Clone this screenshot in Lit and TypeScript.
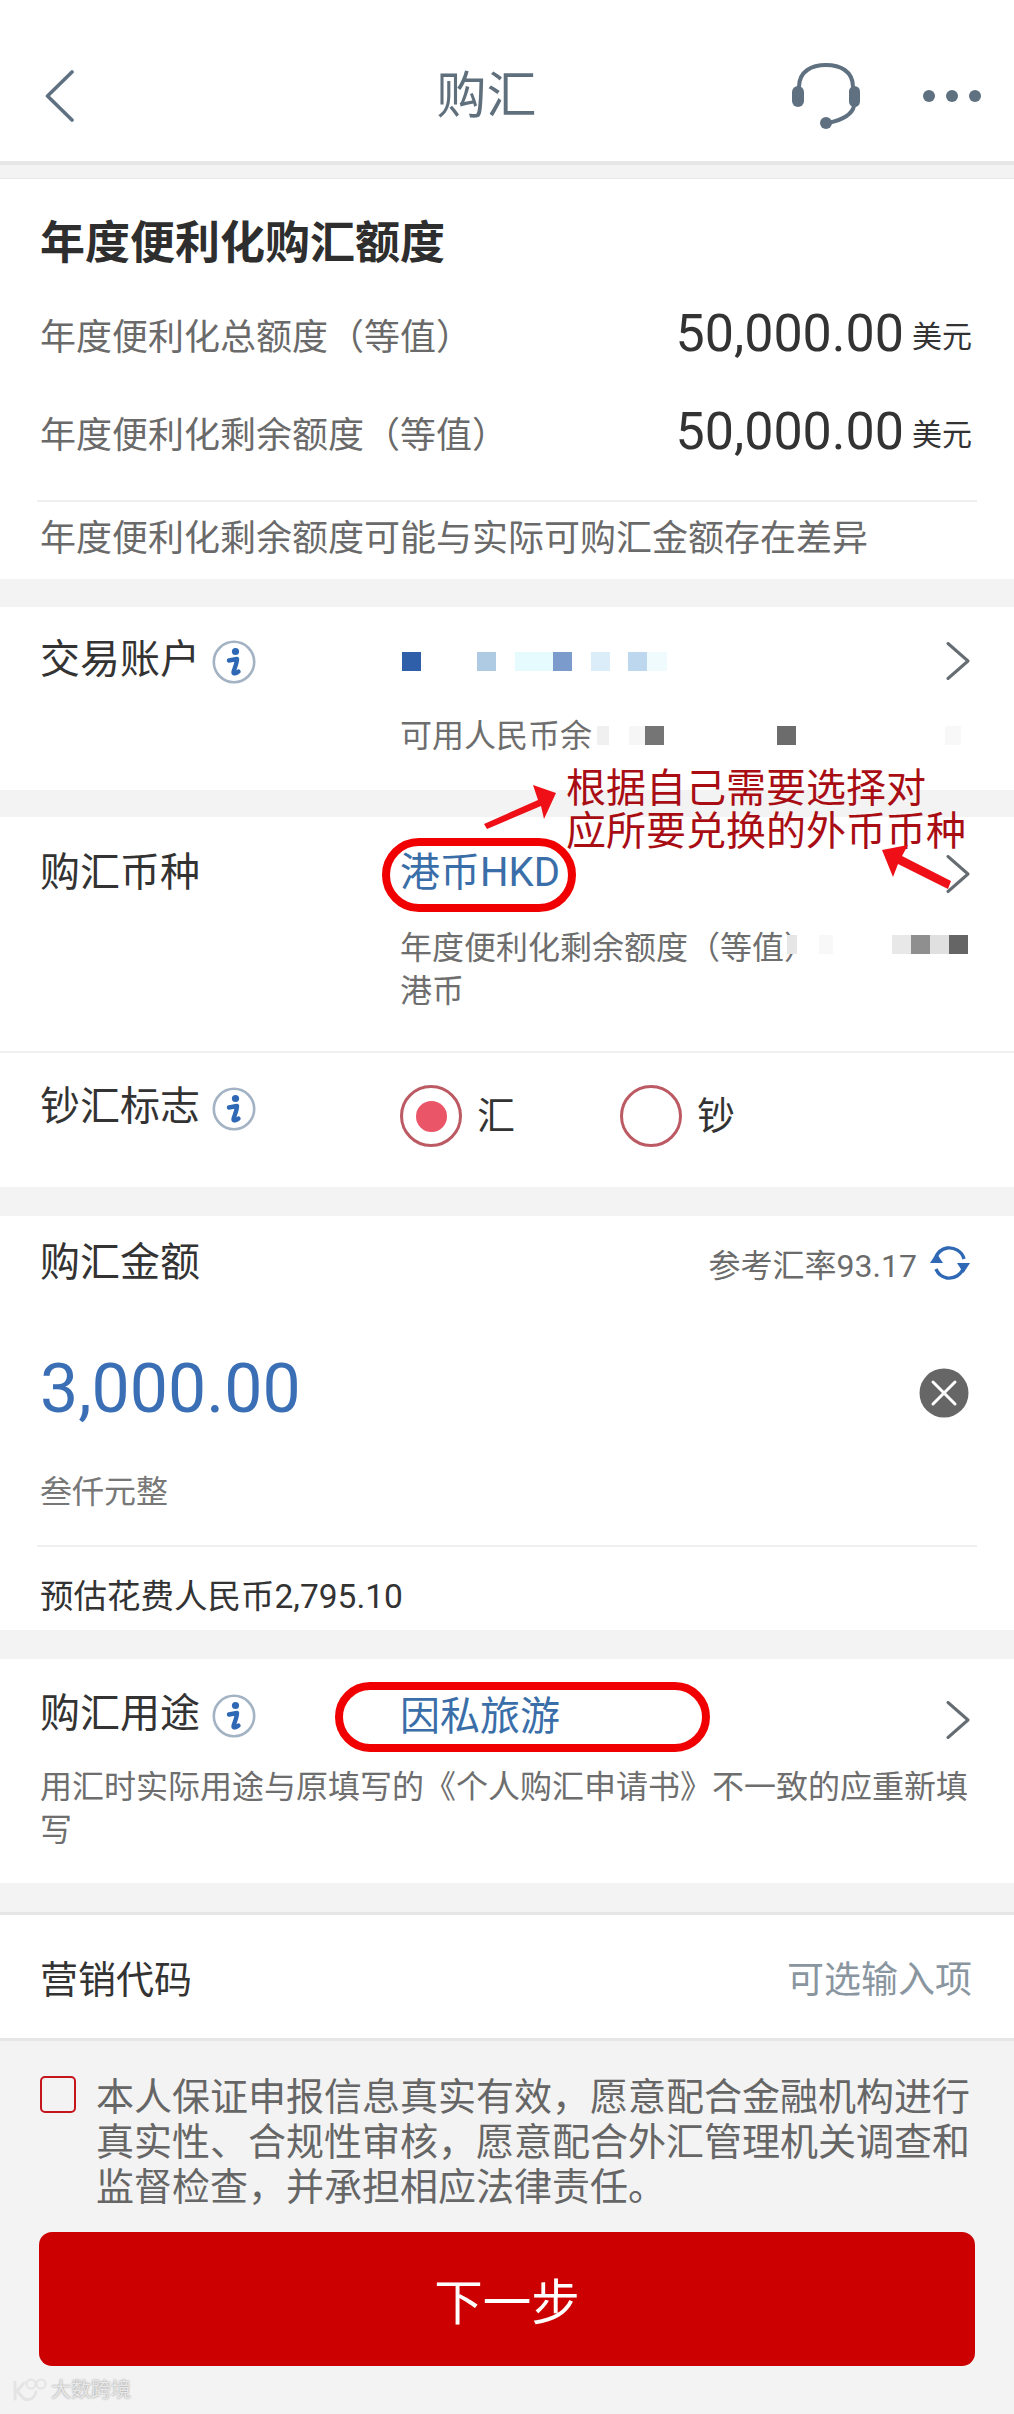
import {LitElement, css, html, svg} from 'lit';
import {customElement} from 'lit/decorators.js';

// [left, width, colour] of the blurred blocks that hide the account data
type Block = [number, number, string];

const ACCOUNT_BLOCKS: Block[] = [
  [2, 19, '#2f5fa8'], [77, 19, '#afcbe4'], [115, 38, '#e6fbfd'], [153, 19, '#7a9bcb'],
  [191, 19, '#dcedfa'], [228, 19, '#bdd7ef'], [247, 20, '#effbfd'],
];
const BALANCE_BLOCKS: Block[] = [
  [0, 12, '#f0f0f0'], [32, 16, '#f6f6f6'], [48, 19, '#757575'], [348, 16, '#f8f8f8'], [180, 19, '#6c6c6c'],
];
const QUOTA_BLOCKS: Block[] = [
  [0, 10, '#e6e6e6'], [32, 14, '#f8f8f8'], [105, 19, '#e8e8e8'], [124, 19, '#8f8f8f'],
  [143, 19, '#e0e0e0'], [162, 19, '#656565'],
];

const infoIcon = html`<svg class="info" viewBox="0 0 44 44">
  <circle cx="22" cy="22" r="20.2" fill="none" stroke="#a3b3c4" stroke-width="2.6"></circle>
  <circle cx="23.5" cy="11.5" r="3.6" fill="#2f68b4"></circle>
  <path d="M17 20.5 L25 19 C25 24 21.5 30 21.5 32.5 C21.5 34 24 33.5 26.5 31.5" fill="none" stroke="#2f68b4" stroke-width="4.4" stroke-linecap="round" stroke-linejoin="round"></path>
</svg>`;

const chevron = html`<svg class="chevron" viewBox="0 0 24 38">
  <path d="M2 1.5 L22 19 L2 36.5" fill="none" stroke="#666d72" stroke-width="3" stroke-linecap="round" stroke-linejoin="round"></path>
</svg>`;

@customElement('app-root')
export class AppRoot extends LitElement {
  static styles = css`
    :host {
      display: block;
      position: relative;
      width: 1014px;
      height: 2414px;
      overflow: hidden;
      background: #f3f3f3;
      color: #333;
      font-family: Roboto, "Noto Sans CJK SC", sans-serif;
    }

    .header {
      display: flex;
      align-items: center;
      height: 161px;
      padding: 30px 33px 0 45px;
      box-sizing: border-box;
      background: #fff;
      border-bottom: 4px solid #e6e6e6;
      box-sizing: content-box;
      height: 131px;
    }
    .back { width: 30px; height: 52px; }
    .title {
      flex: 1;
      text-align: center;
      font-size: 50px;
      line-height: 60px;
      color: #5f6f7c;
      padding-left: 106px;
      margin-top: 0;
    }
    .headset { width: 68px; height: 66px; margin-right: 63px; margin-top: 0; }
    .dots { display: flex; gap: 11px; }
    .dots i { width: 12px; height: 12px; border-radius: 50%; background: #5f7180; }

    .card { background: #fff; margin-bottom: 29px; }
    .quota { margin-top: 13px; border-top: 1px solid #e8e8e8; padding: 39px 0 0; height: 361px; box-sizing: content-box; margin-bottom: 28px; }
    .quota h2 { margin: 0 40px 34px; font-size: 45px; line-height: 52px; font-weight: 700; color: #2e2e2e; }
    .quota-row { display: flex; align-items: center; justify-content: space-between; padding: 0 42px 0 40px; height: 60px; margin-bottom: 38px; color: #6a6a6a; font-size: 36px; }
    .amount { display: flex; align-items: center; gap: 8px; color: #333; font-size: 52px; line-height: 60px; }
    .amount small { font-size: 30px; margin-top: 6px; }
    .rule { height: 2px; background: #efefef; margin: 0 37px; }
    .quota p { margin: 0 40px; padding-top: 13px; font-size: 36px; line-height: 48px; color: #6a6a6a; }

    .row { display: flex; align-items: flex-start; padding: 0 44px 0 40px; }
    .label { display: flex; align-items: center; gap: 12px; width: 360px; flex: none; font-size: 40px; line-height: 50px; color: #333; white-space: nowrap; }
    .info { width: 44px; height: 44px; flex: none; margin-top: 4px; }
    .value { flex: 1; min-width: 0; font-size: 40px; line-height: 50px; color: #3a6ea8; }
    .chevron { width: 24px; height: 38px; flex: none; margin-top: 7px; }
    .sub { margin-left: 400px; font-size: 32px; line-height: 43px; color: #6e6e6e; padding-right: 44px; }
    .masked { position: relative; white-space: nowrap; }
    .mosaic { position: absolute; top: 0; height: 19px; }
    .cover { position: absolute; top: 0; bottom: 0; right: 0; background: #fff; }

    .account { height: 183px; margin-bottom: 27px; padding-top: 28px; box-sizing: border-box; }
    .account-line { position: relative; height: 50px; }
    .account .sub { margin-top: 30px; }

    .currency { padding-top: 31px; margin-bottom: 29px; }
    .currency .sub { margin-top: 29px; padding-bottom: 38px; }
    .flag { display: flex; align-items: flex-start; height: 136px; border-top: 2px solid #f0f0f0; padding: 29px 44px 0 40px; box-sizing: border-box; }
    .radios { display: flex; align-items: center; margin-top: 3px; }
    .radio { width: 62px; height: 62px; box-sizing: border-box; border: 3px solid #bc5a64; border-radius: 50%; display: flex; align-items: center; justify-content: center; }
    .radio i { width: 31px; height: 31px; border-radius: 50%; background: #ea5568; }
    .radio-text { font-size: 38px; line-height: 50px; color: #333; margin: 0 105px 0 15px; width: 38px; }

    .buy { height: 414px; padding-top: 22px; box-sizing: border-box; }
    .buy-head { display: flex; align-items: center; justify-content: space-between; padding: 0 44px 0 40px; height: 50px; }
    .buy-head .label { width: auto; }
    .rate { display: flex; align-items: center; gap: 13px; font-size: 32px; color: #6b6b6b; }
    .refresh { width: 40px; height: 36px; }
    .buy-amount { display: flex; align-items: center; justify-content: space-between; padding: 0 45px 0 40px; margin-top: 56px; height: 90px; font-size: 68px; line-height: 90px; color: #3b6fb5; }
    .clear { width: 50px; height: 50px; margin-top: 8px; }
    .words { margin: 36px 40px 0; font-size: 32px; line-height: 44px; color: #777; }
    .buy .rule { margin-top: 31px; }
    .estimate { margin: 28px 40px 0; font-size: 33.5px; line-height: 44px; color: #333; }

    .usage { padding-top: 30px; height: 224px; box-sizing: border-box; margin-bottom: 29px; }
    .usage .value { padding-left: 0; }
    .usage .chevron { margin-top: 12px; }
    .note { margin: 24px 40px 0; font-size: 32px; line-height: 43px; color: #6e6e6e; }

    .code { display: flex; align-items: center; justify-content: space-between; height: 123px; padding: 0 42px 0 40px; border-top: 3px solid #e6e6e6; border-bottom: 3px solid #e6e6e6; font-size: 38px; color: #333; background: #fff; }
    .code span:last-child { color: #8a969f; font-size: 37px; }

    .agree { display: flex; gap: 20px; padding: 34px 42px 0 40px; }
    .check { flex: none; width: 36px; height: 37px; box-sizing: border-box; border: 2.5px solid #c4141c; border-radius: 5px; margin-top: 1px; }
    .agree p { margin: 0; font-size: 38px; line-height: 45px; color: #666; }

    .next { display: flex; align-items: center; justify-content: center; height: 134px; margin: 22px 39px 0; border-radius: 13px; background: #cc0000; color: #fff; font-size: 48.5px; }

    .mark { position: absolute; left: 11px; bottom: 11px; display: flex; align-items: center; gap: 4px; font-size: 20px; line-height: 22px; color: #e8e8e8; text-shadow: 0 0 2px #8a8a8a; }
    .mark svg { width: 36px; height: 26px; }

    .pill { position: absolute; box-sizing: border-box; border: 8px solid #f00000; border-radius: 40px; }
    .pill.hkd { left: 382px; top: 838px; width: 194px; height: 74px; }
    .pill.usage-pill { left: 335px; top: 1682px; width: 375px; height: 70px; }
    .callout { position: absolute; left: 566px; top: 768px; font-size: 40px; line-height: 42.5px; color: #a90d14; white-space: nowrap; }
    .arrows { position: absolute; left: 0; top: 0; width: 1014px; height: 2414px; pointer-events: none; }
  `;

  private blocks(items: Block[]) {
    return items.map(([left, width, color]) =>
      html`<span class="mosaic" style="left:${left}px;width:${width}px;background:${color}"></span>`);
  }

  render() {
    return html`
      <div class="header">
        <svg class="back" viewBox="0 0 30 52">
          <path d="M27 2 L2.5 26 L27 50" fill="none" stroke="#5f7180" stroke-width="3.6" stroke-linecap="round" stroke-linejoin="round" transform="translate(0 0)"></path>
        </svg>
        <div class="title">购汇</div>
        <svg class="headset" viewBox="0 0 68 66">
          <path d="M7 24 C7 8 20 2 34 2 C48 2 61 8 61 24" fill="none" stroke="#5f7180" stroke-width="4"></path>
          <rect x="0" y="23" width="12" height="21" rx="6" fill="#5f7180"></rect>
          <rect x="57" y="23" width="11" height="21" rx="5.5" fill="#5f7180"></rect>
          <path d="M62 43 C60 52 50 57 36 60" fill="none" stroke="#5f7180" stroke-width="4"></path>
          <circle cx="34" cy="60" r="6" fill="#5f7180"></circle>
        </svg>
        <div class="dots"><i></i><i></i><i></i></div>
      </div>

      <section class="card quota">
        <h2>年度便利化购汇额度</h2>
        <div class="quota-row"><span>年度便利化总额度（等值）</span><span class="amount">50,000.00<small>美元</small></span></div>
        <div class="quota-row"><span>年度便利化剩余额度（等值）</span><span class="amount">50,000.00<small>美元</small></span></div>
        <div class="rule"></div>
        <p>年度便利化剩余额度可能与实际可购汇金额存在差异</p>
      </section>

      <section class="card account">
        <div class="row">
          <div class="label">交易账户${infoIcon}</div>
          <div class="value account-line"><span class="mosaic" style="top:16px;left:0"></span>${ACCOUNT_BLOCKS.map(([left, width, color]) =>
            html`<span class="mosaic" style="top:17px;left:${left}px;width:${width}px;background:${color}"></span>`)}</div>
          ${chevron}
        </div>
        <div class="sub masked">可用人民币余${BALANCE_BLOCKS.map(([left, width, color]) =>
          html`<span class="mosaic" style="top:11px;left:${left + 597 - 400 - 0}px;width:${width}px;background:${color}"></span>`)}</div>
      </section>

      <section class="card currency">
        <div class="row">
          <div class="label">购汇币种</div>
          <div class="value">港币HKD</div>
          ${chevron}
        </div>
        <div class="sub masked">年度便利化剩余额度（等值）${QUOTA_BLOCKS.map(([left, width, color]) =>
          html`<span class="mosaic" style="top:8px;left:${left + 387}px;width:${width}px;background:${color}"></span>`)}<br />港币</div>
        <div class="flag">
          <div class="label">钞汇标志${infoIcon}</div>
          <div class="radios">
            <div class="radio"><i></i></div><div class="radio-text">汇</div>
            <div class="radio"></div><div class="radio-text">钞</div>
          </div>
        </div>
      </section>

      <section class="card buy">
        <div class="buy-head">
          <div class="label">购汇金额</div>
          <div class="rate">参考汇率93.17
            <svg class="refresh" viewBox="0 0 40 36">
              <path d="M6 15 C8 6 16 2 23 3 C28 4 32 7 34 12" fill="none" stroke="#2f68b4" stroke-width="3.4" transform="rotate(180 20 18)"></path>
              <path d="M6 22 C8 30 16 34 23 33 C28 32 32 29 34 24" fill="none" stroke="#2f68b4" stroke-width="3.4" transform="rotate(180 20 18)"></path>
              <path d="M0 18 H13 L6.5 8 Z" fill="#2f68b4"></path>
              <path d="M27 18 H40 L33.5 28 Z" fill="#2f68b4"></path>
            </svg>
          </div>
        </div>
        <div class="buy-amount">3,000.00
          <svg class="clear" viewBox="0 0 50 50">
            <circle cx="25" cy="25" r="24.5" fill="#666"></circle>
            <path d="M14 14 L36 36 M36 14 L14 36" stroke="#fff" stroke-width="3" stroke-linecap="round"></path>
          </svg>
        </div>
        <div class="words">叁仟元整</div>
        <div class="rule"></div>
        <div class="estimate">预估花费人民币2,795.10</div>
      </section>

      <section class="card usage">
        <div class="row">
          <div class="label">购汇用途${infoIcon}</div>
          <div class="value" style="margin-top:3px">因私旅游</div>
          ${chevron}
        </div>
        <div class="note">用汇时实际用途与原填写的《个人购汇申请书》不一致的应重新填写</div>
      </section>

      <div class="code"><span>营销代码</span><span>可选输入项</span></div>

      <div class="agree">
        <div class="check"></div>
        <p>本人保证申报信息真实有效，愿意配合金融机构进行真实性、合规性审核，愿意配合外汇管理机关调查和监督检查，并承担相应法律责任。</p>
      </div>

      <div class="next">下一步</div>

      <div class="mark">
        <svg viewBox="0 0 36 26">
          <path d="M4 5 V22 M13 6 L6 14 L13 22 C20 24 24 20 25 15" fill="none" stroke="#e4e4e4" stroke-width="3" stroke-linecap="round"></path>
          <circle cx="20" cy="7" r="4.5" fill="none" stroke="#e4e4e4" stroke-width="2"></circle>
          <circle cx="30" cy="7" r="4.5" fill="none" stroke="#e4e4e4" stroke-width="2"></circle>
        </svg>
        大数跨境
      </div>

      <div class="pill hkd"></div>
      <div class="pill usage-pill"></div>
      <div class="callout">根据自己需要选择对<br />应所要兑换的外币币种</div>
      <svg class="arrows" viewBox="0 0 1014 2414">
        ${svg`<path d="M484 824 L538 800 L533 785 L556 793 L544 819 L541 806 L487 829 Z" fill="#ee0f17"></path>`}
        ${svg`<path d="M951 881 L902 856 L908 845 L882 850 L893 877 L898 864 L948 889 Z" fill="#ee0f17"></path>`}
      </svg>
    `;
  }
}
